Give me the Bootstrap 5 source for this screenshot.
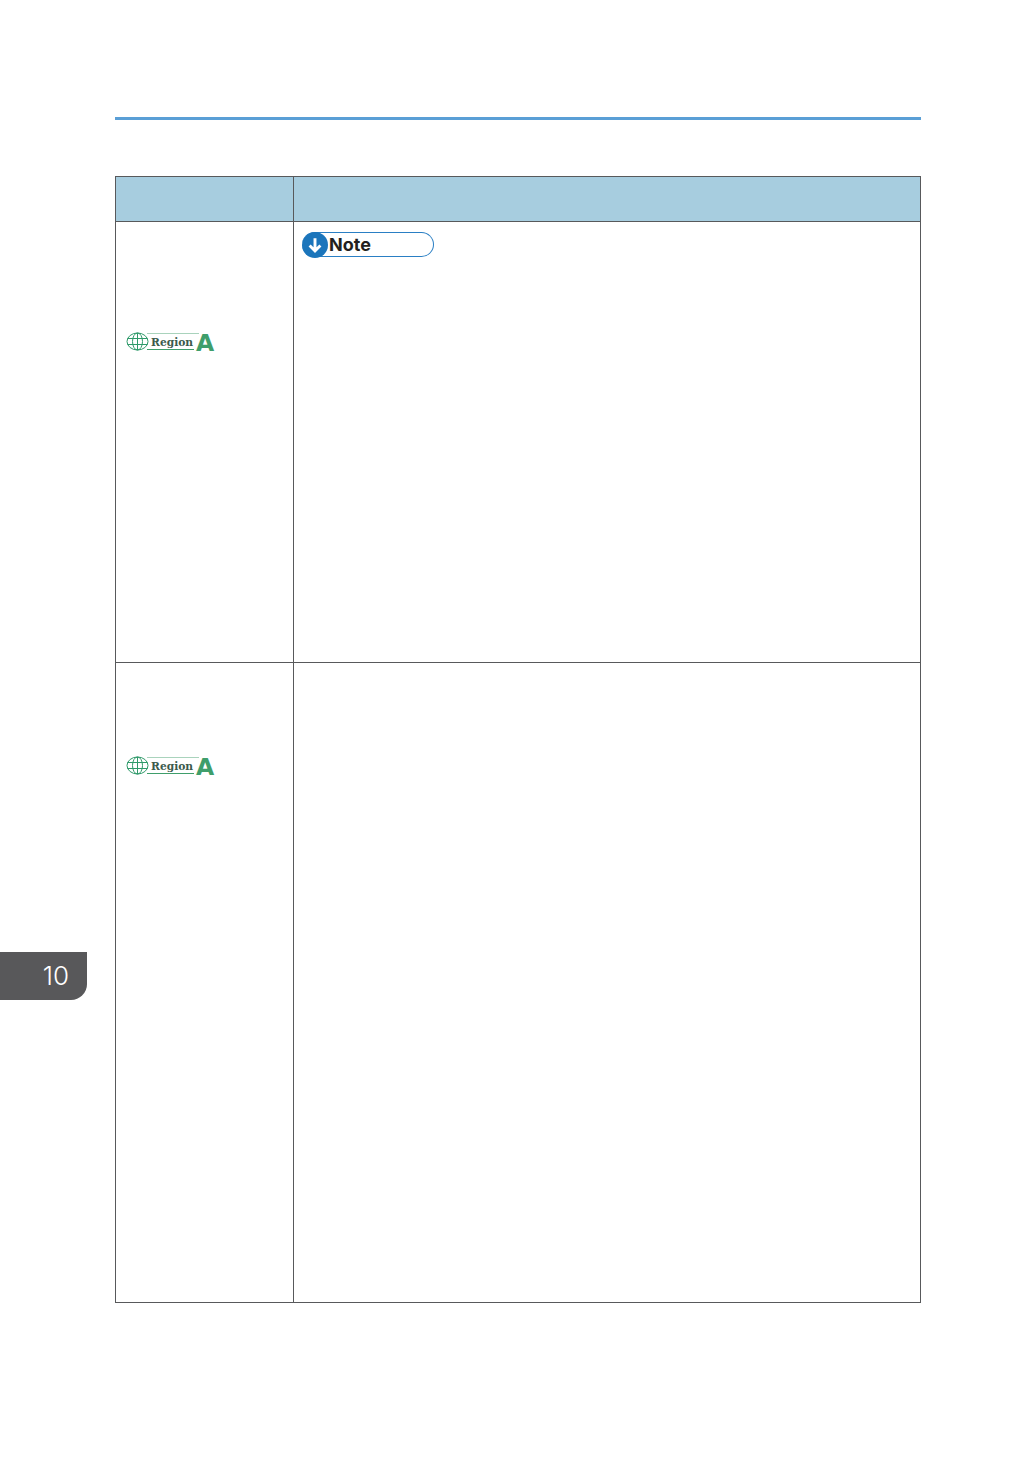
<!DOCTYPE html>
<html lang="en">
<head>
<meta charset="utf-8">
<title>Page</title>
<link href="https://cdn.jsdelivr.net/npm/bootstrap@5.3.0/dist/css/bootstrap.min.css" rel="stylesheet">
<style>
html,body{margin:0;background:#fff;font-family:"Liberation Sans",Arial,sans-serif}
.pg{width:1036px;height:1470px;position:relative;overflow:hidden;padding:117px 115px 0 115px}
.top-rule{height:3px;background:#5a9fd6}
.spec{width:806px;margin:56px 0 0;table-layout:fixed;border-collapse:collapse;--bs-table-bg:transparent}
.spec td,.spec th{border:1px solid #58595b;padding:0 0 0 8px;box-shadow:none;vertical-align:top}
.spec thead th{height:45px;background:#a7cddf}
.c1{width:178px}
.r1{height:441px}
.r2{height:640px}
.spec .note-cell{padding-top:10px}
.spec .reg-cell{padding-left:10px}
.r1 .reg-cell.reg-cell{padding-top:109px}
.r2 .reg-cell.reg-cell{padding-top:92px}
.reg-mark{display:block;width:90px;height:22px;overflow:visible}
.note-pill{width:132px;height:25px;display:flex;align-items:center;border:1.5px solid #2a7fc4;border-radius:13px;border-left:0}
.note-dot{width:26px;height:26px;border-radius:50%;background:#1b75bb;flex:none;display:flex;align-items:center;justify-content:center;margin:0}
.note-txt{font-family:"Inter","Liberation Sans",sans-serif;font-weight:700;font-size:18px;line-height:1;color:#231f20;margin-left:1px}
.tab-num{position:absolute;left:0;top:952px;width:87px;height:48px;background:#58585a;border-bottom-right-radius:16px;display:flex;align-items:center;justify-content:flex-end;padding-right:18px;color:#fff;font-family:"Inter","Liberation Sans",sans-serif;font-size:26px;font-weight:300;line-height:1}
</style>
</head>
<body>
<div class="pg">
  <div class="top-rule"></div>
  <table class="table spec mb-0">
    <colgroup><col class="c1"><col></colgroup>
    <thead><tr><th></th><th></th></tr></thead>
    <tbody>
      <tr class="r1">
        <td class="reg-cell">
          <svg class="reg-mark" viewBox="0 0 90 22" aria-hidden="true">
            <g fill="none" stroke="#2f9a6a" stroke-width="1">
              <ellipse cx="11.500" cy="10.500" rx="10.500" ry="8.500"/><ellipse cx="11.500" cy="10.500" rx="5" ry="8.500"/><path d="M11.500 2v17M1.500 7.500h20M1.500 13.500h20"/>
            </g>
            <path d="M21 2.500h52" stroke="#a9d3bc" stroke-width="1" fill="none"/>
            <path d="M21 18.500h47" stroke="#3f9e6b" stroke-width="1" fill="none"/>
            <text x="25" y="14.500" font-family="'DejaVu Serif','Liberation Serif',serif" font-size="10.700" font-weight="700" fill="#3c5a4c">Region</text>
            <text x="70" y="20" font-family="'DejaVu Sans','Liberation Sans',sans-serif" font-size="23.500" font-weight="700" fill="#3f9e6b">A</text>
          </svg>
        </td>
        <td class="note-cell">
          <div class="note-pill"><span class="note-dot"><svg width="18" height="18" viewBox="0 0 16 16"><path d="M8 2v11M3.200 8.500L8 13.200l4.800-4.700" fill="none" stroke="#fff" stroke-width="2.600"/></svg></span><span class="note-txt">Note</span></div>
        </td>
      </tr>
      <tr class="r2">
        <td class="reg-cell">
          <svg class="reg-mark" viewBox="0 0 90 22" aria-hidden="true">
            <g fill="none" stroke="#2f9a6a" stroke-width="1">
              <ellipse cx="11.500" cy="10.500" rx="10.500" ry="8.500"/><ellipse cx="11.500" cy="10.500" rx="5" ry="8.500"/><path d="M11.500 2v17M1.500 7.500h20M1.500 13.500h20"/>
            </g>
            <path d="M21 2.500h52" stroke="#a9d3bc" stroke-width="1" fill="none"/>
            <path d="M21 18.500h47" stroke="#3f9e6b" stroke-width="1" fill="none"/>
            <text x="25" y="14.500" font-family="'DejaVu Serif','Liberation Serif',serif" font-size="10.700" font-weight="700" fill="#3c5a4c">Region</text>
            <text x="70" y="20" font-family="'DejaVu Sans','Liberation Sans',sans-serif" font-size="23.500" font-weight="700" fill="#3f9e6b">A</text>
          </svg>
        </td>
        <td></td>
      </tr>
    </tbody>
  </table>
  <div class="tab-num">10</div>
</div>
</body>
</html>
